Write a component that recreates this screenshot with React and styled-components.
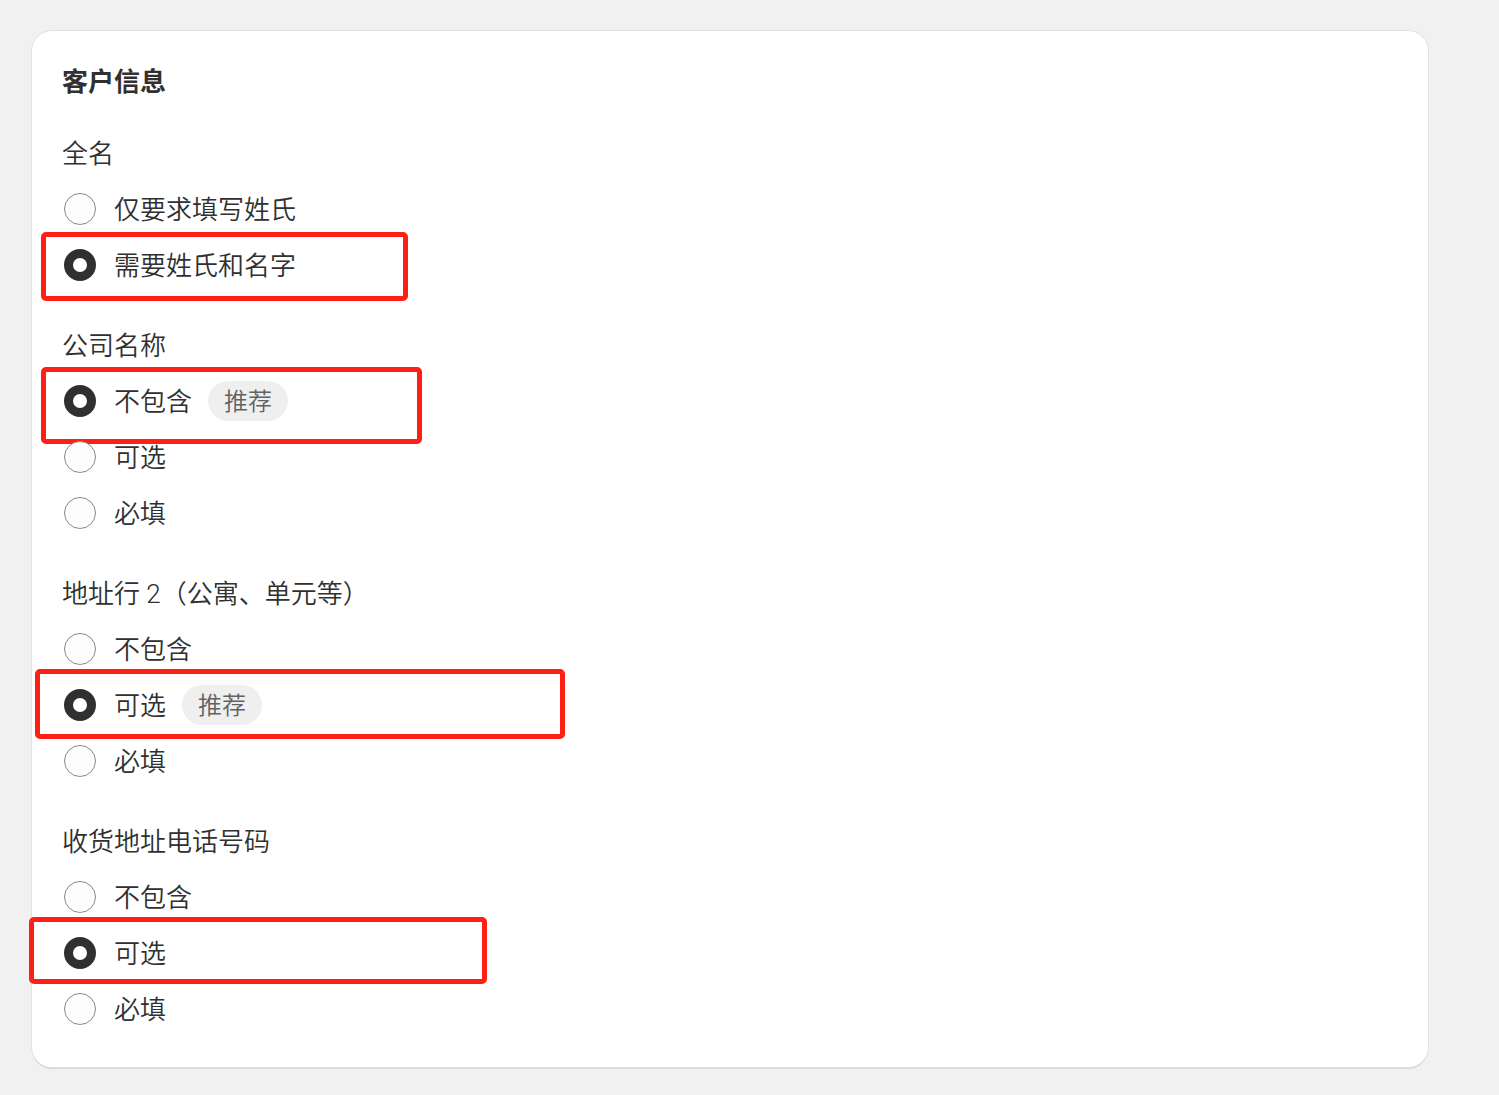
import React from 'react';
import styled, { createGlobalStyle } from 'styled-components';

const GlobalStyle = createGlobalStyle`
  html, body {
    margin: 0;
    padding: 0;
    background: #f1f1f1;
  }
  body {
    font-family: Roboto, "Noto Sans CJK SC", sans-serif;
    color: #303030;
  }
`;

const Page = styled.div`
  padding: 31px 0 28px 32px;
`;

const Card = styled.section`
  position: relative;
  width: 1396px;
  box-sizing: border-box;
  padding: 32px 30px 30px;
  background: #ffffff;
  border-radius: 20px;
  box-shadow: 0 0 0 1px #e2e2e2, 0 2px 0 0 #d6d6d6;
`;

const Title = styled.h2`
  margin: 0 0 25px;
  font-size: 26px;
  line-height: 36px;
  font-weight: 700;
  color: #303030;

  & > span {
    display: inline-block;
    margin-top: 1px;
  }
`;

const Sections = styled.div`
  display: flex;
  flex-direction: column;
  gap: 24px;
`;

const Section = styled.fieldset`
  margin: 0;
  padding: 0;
  border: none;
  display: flex;
  flex-direction: column;
`;

const Label = styled.div`
  height: 56px;
  display: flex;
  align-items: center;
  font-size: 26px;
  font-weight: 350;
  color: #303030;

  & > span {
    margin-top: -4px;
  }
`;

const Row = styled.label`
  position: relative;
  height: 56px;
  display: flex;
  align-items: center;
  gap: 18px;
  font-size: 26px;
  font-weight: 350;
  color: #303030;
  cursor: pointer;
`;

const Radio = styled.span`
  flex: none;
  width: 32px;
  height: 32px;
  margin-left: 2px;
  box-sizing: border-box;
  border-radius: 50%;
  background: ${(p) => (p.$checked ? '#ffffff' : '#fdfdfd')};
  border: ${(p) => (p.$checked ? '9px solid #303030' : '1px solid #8a8a8a')};
`;

const OptionText = styled.span`
  display: flex;
  align-items: center;
  gap: 16px;
`;

const Text = styled.span`
  margin-top: -4px;
`;

const Badge = styled.span`
  display: inline-flex;
  align-items: center;
  height: 40px;
  padding: 2px 16px 0;
  box-sizing: border-box;
  border-radius: 20px;
  background: #efefef;
  color: #616161;
  font-size: 24px;
  line-height: 1;
`;

const Highlight = styled.span`
  position: absolute;
  left: ${(p) => p.$left}px;
  top: ${(p) => p.$top}px;
  width: ${(p) => p.$width}px;
  height: ${(p) => p.$height}px;
  box-sizing: border-box;
  border: 5px solid #ff1f14;
  border-radius: 5px;
  pointer-events: none;
`;

const sections = [
  {
    label: '全名',
    options: [
      { text: '仅要求填写姓氏' },
      {
        text: '需要姓氏和名字',
        checked: true,
        mark: { left: -21, top: -5, width: 367, height: 69 },
      },
    ],
  },
  {
    label: '公司名称',
    options: [
      {
        text: '不包含',
        checked: true,
        badge: '推荐',
        mark: { left: -21, top: -6, width: 381, height: 77 },
      },
      { text: '可选' },
      { text: '必填' },
    ],
  },
  {
    label: '地址行 2（公寓、单元等）',
    options: [
      { text: '不包含' },
      {
        text: '可选',
        checked: true,
        badge: '推荐',
        mark: { left: -27, top: -8, width: 530, height: 70 },
      },
      { text: '必填' },
    ],
  },
  {
    label: '收货地址电话号码',
    options: [
      { text: '不包含' },
      {
        text: '可选',
        checked: true,
        mark: { left: -33, top: -8, width: 458, height: 67 },
      },
      { text: '必填' },
    ],
  },
];

const App = () => (
  <>
    <GlobalStyle />
    <Page>
      <Card>
        <Title>
          <span>客户信息</span>
        </Title>
        <Sections>
          {sections.map((section) => (
            <Section key={section.label}>
              <Label>
                <span>{section.label}</span>
              </Label>
              {section.options.map((option) => (
                <Row key={option.text}>
                  <Radio $checked={option.checked} />
                  <OptionText>
                    <Text>{option.text}</Text>
                    {option.badge && <Badge>{option.badge}</Badge>}
                  </OptionText>
                  {option.mark && (
                    <Highlight
                      $left={option.mark.left}
                      $top={option.mark.top}
                      $width={option.mark.width}
                      $height={option.mark.height}
                    />
                  )}
                </Row>
              ))}
            </Section>
          ))}
        </Sections>
      </Card>
    </Page>
  </>
);

export default App;
